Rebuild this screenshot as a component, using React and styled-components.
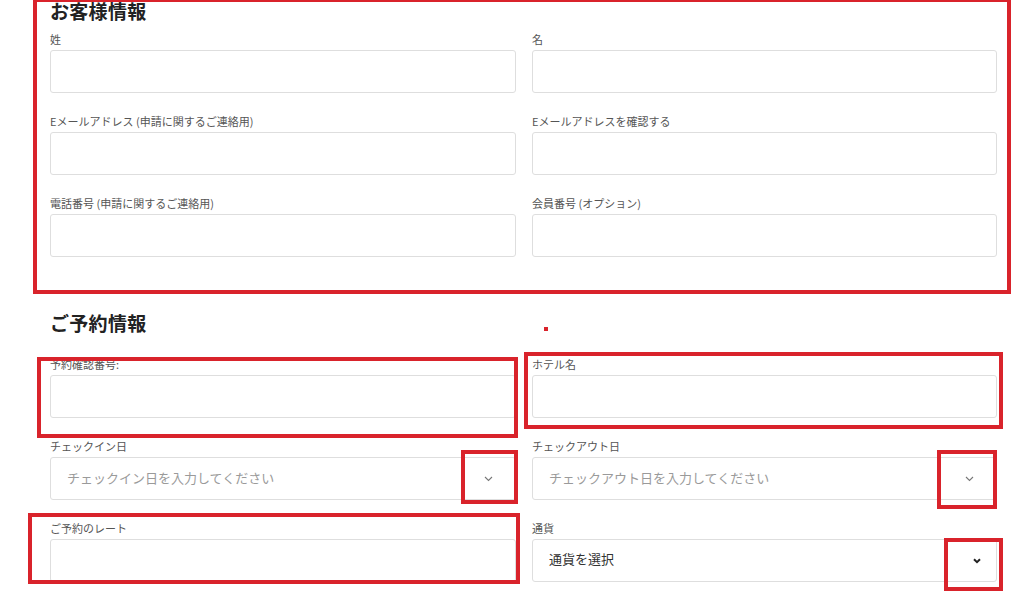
import React from "react";
import styled, { createGlobalStyle } from "styled-components";

const GlobalStyle = createGlobalStyle`
  html, body {
    margin: 0;
    padding: 0;
    background: #ffffff;
  }
  body {
    font-family: "Noto Sans CJK JP", "Noto Sans", "Liberation Sans", sans-serif;
    color: #333;
  }
`;

// page + form layout
const Page = styled.div`
  position: relative;
  width: 1024px;
  height: 600px;
  overflow: hidden;
  background: #fff;
`;

const Form = styled.div`
  width: 947px;
  padding: 1px 0 0 50px;
`;

const Section = styled.section`
  margin-bottom: ${({ $after }) => $after || 0}px;
`;

const Title = styled.h2`
  margin: 0 0 ${({ $gap }) => $gap}px;
  font-size: 19px;
  line-height: 20px;
  font-weight: 700;
  color: #222;
  letter-spacing: 0.3px;
`;

const Grid = styled.div`
  display: grid;
  grid-template-columns: 466px 465px;
  column-gap: 16px;
  row-gap: 22px;
`;

const Field = styled.div`
  display: flex;
  flex-direction: column;
`;

const Label = styled.label`
  font-size: 11px;
  line-height: 12px;
  color: #555;
  margin-bottom: 5px;
  white-space: nowrap;
`;

const Input = styled.div`
  box-sizing: border-box;
  height: 43px;
  border: 1px solid #dedede;
  border-radius: 3px;
  background: #fff;
  display: flex;
  align-items: center;
  justify-content: space-between;
  padding: 0 ${({ $padRight }) => $padRight || 16}px 0 16px;
`;

const Value = styled.span`
  font-size: 13px;
  line-height: 1;
  padding-bottom: ${({ $muted }) => ($muted ? 2 : 4)}px;
  color: ${({ $muted }) => ($muted ? "#9a9a9a" : "#333")};
`;

// annotation overlay
const Mark = styled.div`
  position: absolute;
  box-sizing: border-box;
  border: 4px solid #d9232b;
  pointer-events: none;
`;

const Dot = styled.div`
  position: absolute;
  width: 4px;
  height: 4px;
  background: #d9232b;
`;

const ThinChevron = () => (
  <svg width="9" height="6" viewBox="0 0 9 6">
    <polyline points="1,1 4.5,4.5 8,1" fill="none" stroke="#777" strokeWidth="1.1" />
  </svg>
);

const BoldChevron = () => (
  <svg width="8" height="6" viewBox="0 0 8 6">
    <polyline points="1,1.2 4,4.2 7,1.2" fill="none" stroke="#222" strokeWidth="2" />
  </svg>
);

const customerFields = [
  "姓",
  "名",
  "Eメールアドレス (申請に関するご連絡用)",
  "Eメールアドレスを確認する",
  "電話番号 (申請に関するご連絡用)",
  "会員番号 (オプション)",
];

const marks = [
  { left: 33, top: -2, width: 978, height: 296 },
  { left: 37, top: 357, width: 481, height: 81 },
  { left: 524, top: 352, width: 479, height: 77 },
  { left: 461, top: 450, width: 57, height: 54 },
  { left: 937, top: 450, width: 60, height: 59 },
  { left: 28, top: 513, width: 492, height: 71 },
  { left: 944, top: 538, width: 59, height: 53 },
];

function App() {
  return (
    <Page>
      <GlobalStyle />
      <Form>
        <Section $after={56}>
          <Title $gap={12}>お客様情報</Title>
          <Grid>
            {customerFields.map((label) => (
              <Field key={label}>
                <Label>{label}</Label>
                <Input />
              </Field>
            ))}
          </Grid>
        </Section>

        <Section>
          <Title $gap={25}>ご予約情報</Title>
          <Grid>
            <Field>
              <Label>予約確認番号:</Label>
              <Input />
            </Field>
            <Field>
              <Label>ホテル名</Label>
              <Input />
            </Field>
            <Field>
              <Label>チェックイン日</Label>
              <Input $padRight={22}>
                <Value $muted>チェックイン日を入力してください</Value>
                <ThinChevron />
              </Input>
            </Field>
            <Field>
              <Label>チェックアウト日</Label>
              <Input $padRight={22}>
                <Value $muted>チェックアウト日を入力してください</Value>
                <ThinChevron />
              </Input>
            </Field>
            <Field>
              <Label>ご予約のレート</Label>
              <Input />
            </Field>
            <Field>
              <Label>通貨</Label>
              <Input $padRight={15}>
                <Value>通貨を選択</Value>
                <BoldChevron />
              </Input>
            </Field>
          </Grid>
        </Section>
      </Form>

      {marks.map((m, i) => (
        <Mark key={i} style={m} />
      ))}
      <Dot style={{ left: 544, top: 327 }} />
    </Page>
  );
}

export default App;
